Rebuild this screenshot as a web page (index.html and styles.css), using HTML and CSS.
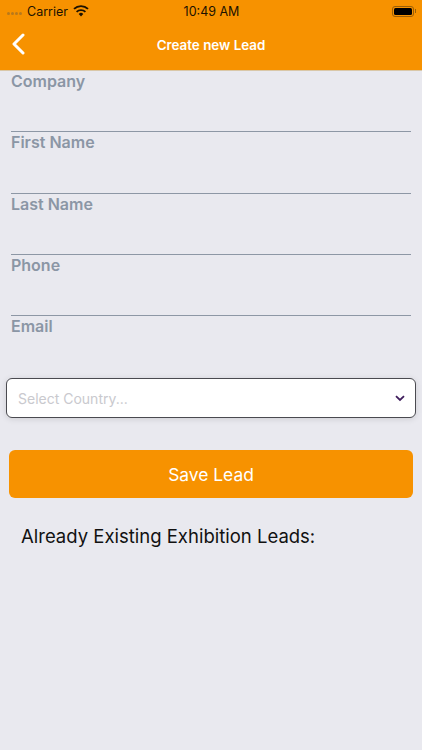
FILE: index.html
```html
<!DOCTYPE html>
<html lang="en">
<head>
  <meta charset="UTF-8" />
  <meta name="viewport" content="width=device-width, initial-scale=1.0"/>
  <title>Create new Lead</title>
  <link rel="stylesheet" href="styles.css">
</head>
<body>

  <header class="top-bar">
    <div class="status-bar">
      <div class="status-left">
        <span class="signal-dots">
          <i></i><i></i><i></i><i></i>
        </span>
        <span>Carrier</span>
        <svg class="wifi-icon" width="16" height="12" viewBox="0 0 16 12">
          <path d="M8 11.5 5.7 8.9a3.4 3.4 0 0 1 4.6 0z" fill="#1c1200"/>
          <path d="M3.6 6.9a6.4 6.4 0 0 1 8.8 0" fill="none" stroke="#1c1200" stroke-width="1.9"/>
          <path d="M1 3.9a10.2 10.2 0 0 1 14 0" fill="none" stroke="#1c1200" stroke-width="1.9"/>
        </svg>
      </div>
      <span class="status-time">10:49 AM</span>
      <div class="status-right">
        <div class="battery">
          <span class="battery-fill"></span>
        </div>
        <span class="battery-nub"></span>
      </div>
    </div>
    <div class="nav-bar">
      <svg class="back-icon" width="14" height="22" viewBox="0 0 14 22">
        <path d="M12 2 3 11l9 9" fill="none" stroke="#fff" stroke-width="3" stroke-linecap="round" stroke-linejoin="round"/>
      </svg>
      <h1>Create new Lead</h1>
    </div>
  </header>

  <main class="lead-form">
    <div class="field"><label>Company</label></div>
    <div class="field"><label>First Name</label></div>
    <div class="field"><label>Last Name</label></div>
    <div class="field"><label>Phone</label></div>
    <div class="field field-last"><label>Email</label></div>

    <div class="country-select">
      <span>Select Country...</span>
      <svg width="10" height="7" viewBox="0 0 10 7">
        <path d="M1 1.2 5 5l4-3.8" fill="none" stroke="#3f1d5c" stroke-width="1.8"/>
      </svg>
    </div>

    <button class="save-btn">Save Lead</button>

    <p class="existing-title">Already Existing Exhibition Leads:</p>
  </main>

</body>
</html>
```

FILE: styles.css
```css
* {
  box-sizing: border-box;
}

body {
  margin: 0;
  height: 750px;
  overflow: hidden;
  background-color: #e9e9ef;
  font-family: 'Inter', 'Liberation Sans', sans-serif;
}

.top-bar {
  height: 71px;
  background-color: #f79200;
  border-bottom: 1px solid #d9c7a8;
}

.status-bar {
  height: 22px;
  padding: 0 6px 0 7px;
  display: grid;
  grid-template-columns: 1fr auto 1fr;
  align-items: center;
  color: #1c1200;
  font-size: 12.5px;
}

.status-left {
  display: flex;
  align-items: center;
  gap: 5px;
}

.signal-dots {
  display: flex;
  gap: 1px;
  margin-top: 4px;
}

.signal-dots i {
  width: 3px;
  height: 3px;
  border-radius: 50%;
  background-color: #b8791b;
}

.status-right {
  display: flex;
  align-items: center;
  justify-content: flex-end;
  gap: 1px;
}

.battery {
  width: 22px;
  height: 11px;
  padding: 1px;
  border: 1px solid #9a5f08;
  border-radius: 3px;
}

.battery-fill {
  display: block;
  height: 100%;
  background-color: #000;
  border-radius: 1.5px;
}

.battery-nub {
  width: 1px;
  height: 4px;
  background-color: #9a5f08;
}

.nav-bar {
  position: relative;
  height: 46px;
  display: flex;
  align-items: center;
  justify-content: center;
}

.nav-bar h1 {
  margin: 0;
  color: #fff;
  font-size: 13.4px;
  font-weight: 600;
}

.back-icon {
  position: absolute;
  left: 11px;
  top: 11px;
}

.lead-form {
  padding: 0 11px;
}

.field {
  height: 61.3px;
  border-bottom: 1px solid #8d97a5;
}

.field label {
  display: block;
  color: #8b96a5;
  font-size: 16px;
  font-weight: 600;
  line-height: 20px;
}

.field-last {
  height: 45px;
  border-bottom: none;
}

.country-select {
  height: 40px;
  margin: 17px -5px 0;
  padding: 0 10px 0 11px;
  display: flex;
  align-items: center;
  justify-content: space-between;
  background-color: #fff;
  border: 1px solid #4a4a50;
  border-radius: 6px;
  box-shadow: 0 1px 6px rgba(0, 0, 0, 0.12);
  color: #c9c9ce;
  font-size: 14px;
}

.save-btn {
  display: block;
  width: 404px;
  height: 48px;
  margin: 32px 0 0 -2px;
  border: none;
  border-radius: 6px;
  background-color: #f79200;
  color: #fff;
  font-family: inherit;
  font-size: 17.4px;
}

.existing-title {
  margin: 26px 0 0 10px;
  color: #111;
  font-size: 18.5px;
  line-height: 24px;
}
```
